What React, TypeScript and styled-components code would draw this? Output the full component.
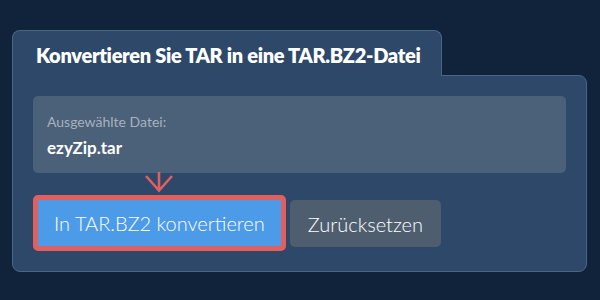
import React from "react";
import styled, { createGlobalStyle } from "styled-components";

const Global = createGlobalStyle`
  html, body { margin: 0; padding: 0; }
  body {
    background: #10233a;
    font-family: Lato, "Open Sans", sans-serif;
    width: 600px;
    height: 300px;
    overflow: hidden;
  }
`;

const Page = styled.div`
  padding: 30px 12px 0 12px;
  width: 576px;
`;

const Tab = styled.div`
  position: relative;
  z-index: 1;
  display: flex;
  align-items: center;
  width: 430px;
  height: 46px;
  box-sizing: border-box;
  margin-bottom: -1px;
  padding: 2px 0 0 23px;
  background: #2d4868;
  border: 1px solid #4b6587;
  border-bottom: none;
  border-radius: 8px 8px 0 0;
`;

const Title = styled.h2`
  margin: 0;
  font-size: 20px;
  font-weight: 800;
  color: #ffffff;
  letter-spacing: -0.3px;
`;

const Panel = styled.div`
  position: relative;
  box-sizing: border-box;
  width: 575px;
  padding: 20px;
  background: #2d4868;
  border: 1px solid #4b6587;
  border-radius: 0 8px 8px 8px;
`;

const FileBox = styled.div`
  box-sizing: border-box;
  height: 77px;
  padding: 17px 14px 0 14px;
  background: #4b6079;
  border-radius: 5px;
`;

const Label = styled.div`
  font-size: 14px;
  line-height: 18px;
  color: #a8b2bf;
`;

const FileName = styled.div`
  margin-top: 6px;
  font-size: 17px;
  line-height: 22px;
  font-weight: 700;
  color: #ffffff;
`;

const Actions = styled.div`
  position: relative;
  display: flex;
  align-items: center;
  gap: 4px;
  margin-top: 22px;
`;

const Button = styled.button<{ $variant: "primary" | "secondary" }>`
  font-family: Lato, "Open Sans", sans-serif;
  font-size: 20px;
  font-weight: 300;
  line-height: 24px;
  color: #ffffff;
  cursor: pointer;
  border-radius: 5px;
  box-sizing: border-box;
  padding: ${(p) => (p.$variant === "primary" ? "11px 16px" : "12px 18px 11px")};
  background: ${(p) => (p.$variant === "primary" ? "#4c9be8" : "#4e5e6f")};
  border: ${(p) => (p.$variant === "primary" ? "5px solid #e06060" : "none")};
`;

const Arrow = styled.svg`
  position: absolute;
  left: 111px;
  top: -23px;
  width: 30px;
  height: 21px;
  overflow: visible;
`;

export default function App() {
  return (
    <>
      <Global />
      <Page>
        <Tab>
          <Title>Konvertieren Sie TAR in eine TAR.BZ2-Datei</Title>
        </Tab>
        <Panel>
          <FileBox>
            <Label>Ausgewählte Datei:</Label>
            <FileName>ezyZip.tar</FileName>
          </FileBox>
          <Actions>
            <Arrow viewBox="0 0 30 21">
              <path
                d="M15 0 V19 M2 4 L15 18.5 L28 4"
                fill="none"
                stroke="#e06060"
                strokeWidth="2.6"
                strokeLinecap="butt"
                strokeLinejoin="miter"
              />
            </Arrow>
            <Button $variant="primary">In TAR.BZ2 konvertieren</Button>
            <Button $variant="secondary">Zurücksetzen</Button>
          </Actions>
        </Panel>
      </Page>
    </>
  );
}
